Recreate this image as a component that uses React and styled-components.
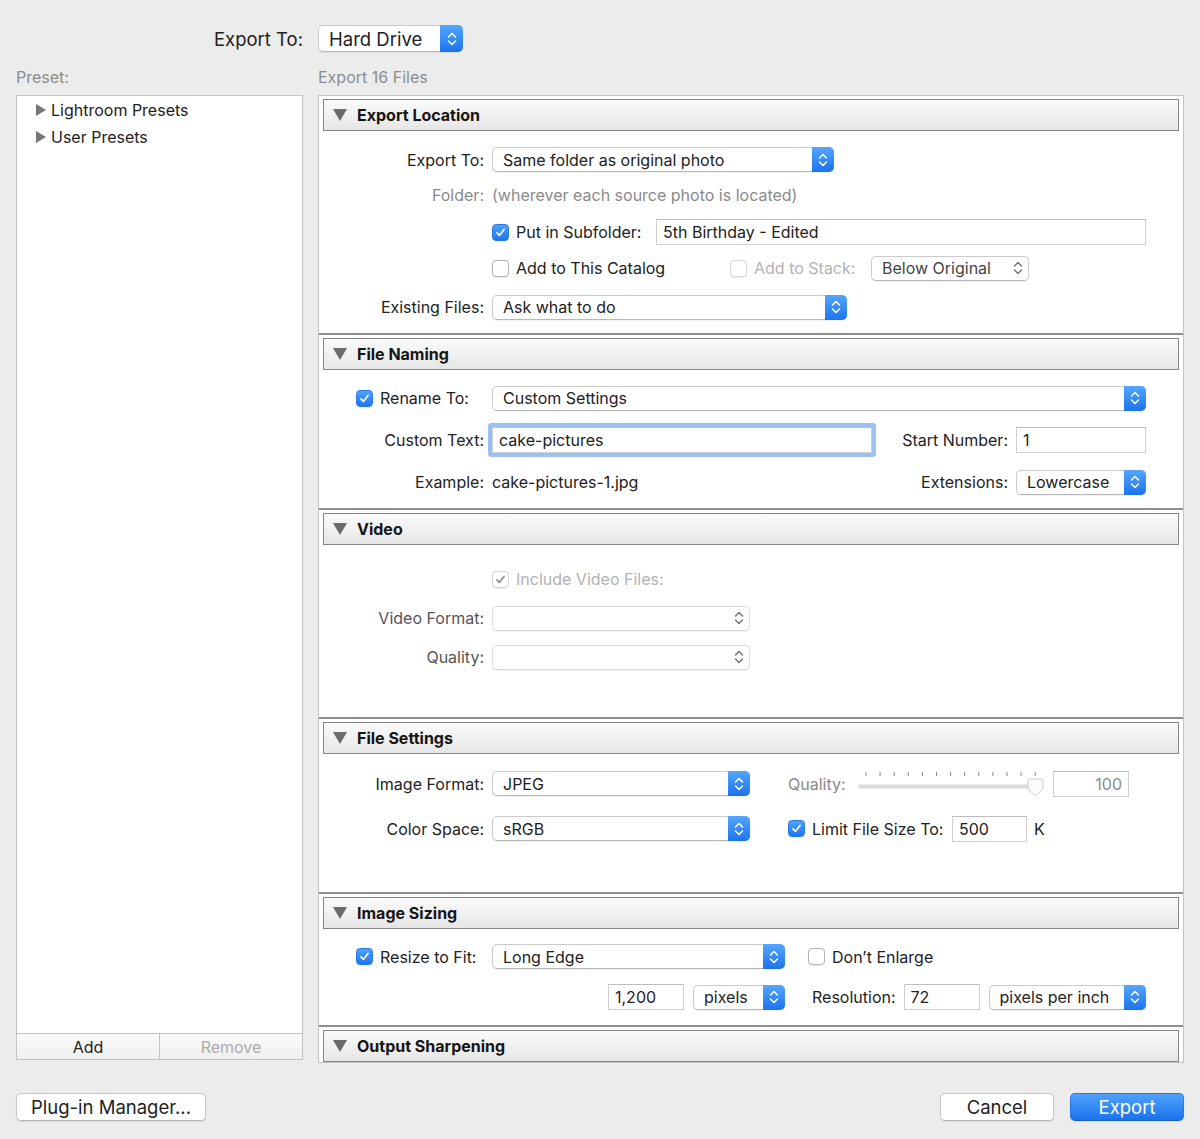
import styled, { createGlobalStyle } from 'styled-components'

const GlobalStyle = createGlobalStyle`
  html, body {
    margin: 0;
    padding: 0;
    background: #ececec;
  }
  body {
    font-family: Inter, "Helvetica Neue", "Liberation Sans", sans-serif;
    font-size: 16px;
    color: #222;
    -webkit-font-smoothing: antialiased;
  }
  * {
    box-sizing: border-box;
  }
`

const Page = styled.div`
  width: 1200px;
  height: 1139px;
  padding: 25px 16px 0;
  overflow: hidden;
`

const TopRow = styled.div`
  display: flex;
  align-items: center;
  gap: 15px;
  height: 27px;
`

const TopLabel = styled.div`
  width: 287px;
  text-align: right;
  font-size: 18.5px;
`

const SubRow = styled.div`
  display: flex;
  gap: 15px;
  height: 18px;
  margin-top: 16px;
  color: #8c8c8c;
  font-size: 16px;
  line-height: 18px;
  & > div:first-child {
    width: 287px;
  }
`

const Columns = styled.div`
  display: flex;
  gap: 15px;
  margin-top: 9px;
  height: 968px;
`

/* ---------- left preset list ---------- */

const PresetPanel = styled.div`
  width: 287px;
  height: 965px;
  background: #fff;
  border: 1px solid #c3c3c3;
  display: flex;
  flex-direction: column;
`

const TreeList = styled.div`
  flex: 1;
  padding: 0 0 0 19px;
`

const TreeItem = styled.div`
  display: flex;
  align-items: center;
  gap: 5px;
  height: 27px;
`

const TreeArrow = styled.span`
  width: 0;
  height: 0;
  border-top: 6px solid transparent;
  border-bottom: 6px solid transparent;
  border-left: 10px solid #777;
`

const PresetButtons = styled.div`
  display: flex;
  height: 26px;
  border-top: 1px solid #c3c3c3;
`

const PresetButton = styled.div`
  flex: 1;
  display: flex;
  align-items: center;
  justify-content: center;
  background: linear-gradient(#fbfbfb, #efefef);
  color: ${p => (p.$disabled ? '#ababab' : '#222')};
  & + & {
    border-left: 1px solid #c3c3c3;
  }
`

/* ---------- right settings panel ---------- */

const SettingsPanel = styled.div`
  width: 866px;
  height: 968px;
  background: #fff;
  border: 1px solid #c3c3c3;
  overflow: hidden;
`

const Section = styled.div`
  padding-top: 3px;
  & + & {
    border-top: 2px solid #8e8e8e;
  }
`

const Header = styled.div`
  height: 32px;
  margin: 0 4px;
  border: 1px solid #858585;
  background: linear-gradient(#fbfbfb, #e6e6e6);
  display: flex;
  align-items: center;
  gap: 10px;
  padding-left: 9px;
  font-weight: 700;
  color: #151515;
`

const HeaderArrow = styled.span`
  width: 0;
  height: 0;
  border-left: 7px solid transparent;
  border-right: 7px solid transparent;
  border-top: 12px solid #6b6b6b;
`

const Body = styled.div`
  height: ${p => p.$h}px;
  padding: ${p => p.$top}px 37px 0 0;
  display: flex;
  flex-direction: column;
  gap: ${p => p.$gap || 0}px;
`

const Row = styled.div`
  display: flex;
  align-items: center;
  height: ${p => p.$h || 26}px;
  flex: none;
`

const Label = styled.div`
  width: 165px;
  flex: none;
  margin-right: 8px;
  text-align: right;
  color: ${p => p.$tone || '#222'};
`

const InlineLabel = styled.div`
  flex: none;
  margin: 0 8px 0 ${p => p.$ml || 0}px;
  width: ${p => (p.$w ? `${p.$w}px` : 'auto')};
  color: ${p => p.$tone || '#222'};
`

const CheckCell = styled.div`
  width: 173px;
  flex: none;
  padding-left: 37px;
  display: flex;
  align-items: center;
  gap: 8px;
`

const CheckWrap = styled.div`
  display: flex;
  align-items: center;
  gap: 7px;
  flex: none;
  width: ${p => (p.$w ? `${p.$w}px` : 'auto')};
  margin-left: ${p => p.$ml || 0}px;
  color: ${p => (p.$disabled ? '#b3b3b3' : '#222')};
`

const Box = styled.span`
  width: 17px;
  height: 17px;
  border-radius: 4px;
  flex: none;
  display: flex;
  align-items: center;
  justify-content: center;
  background: ${p => (p.$on && !p.$disabled ? 'linear-gradient(#4ea2fd, #1f76ee)' : '#fff')};
  border: 1px solid ${p => (p.$on && !p.$disabled ? '#2a7ae6' : p.$disabled ? '#d8d8d8' : '#b3b3b3')};
  box-shadow: 0 0.5px 1px rgba(0, 0, 0, 0.08);
`

const Checkbox = ({ on, disabled }) => (
  <Box $on={on} $disabled={disabled}>
    {on && (
      <svg width="11" height="11" viewBox="0 0 11 11">
        <path
          d="M2 5.8 L4.4 8.4 L9 2.4"
          fill="none"
          stroke={disabled ? '#8a8a8a' : '#fff'}
          strokeWidth="1.7"
          strokeLinecap="round"
          strokeLinejoin="round"
        />
      </svg>
    )}
  </Box>
)

const Check = ({ on, disabled, children, w, ml }) => (
  <CheckWrap $disabled={disabled} $w={w} $ml={ml}>
    <Checkbox on={on} disabled={disabled} />
    {children}
  </CheckWrap>
)

const PopupBox = styled.div`
  flex: none;
  width: ${p => p.$w}px;
  height: ${p => p.$h || 25}px;
  margin-left: ${p => p.$ml || 0}px;
  display: flex;
  align-items: stretch;
  background: #fff;
  border: 1px solid ${p => (p.$disabled ? '#dedede' : '#cbcbcb')};
  border-bottom-color: ${p => (p.$disabled ? '#d6d6d6' : '#b8b8b8')};
  border-radius: 5px;
  box-shadow: 0 0.5px 1px rgba(0, 0, 0, 0.06);
  font-size: ${p => p.$fs || 16}px;
`

const PopupText = styled.div`
  flex: 1;
  display: flex;
  align-items: center;
  padding-left: ${p => p.$pl || 10}px;
  color: ${p => p.$tone || '#222'};
  white-space: nowrap;
  overflow: hidden;
`

const ArrowCap = styled.div`
  width: ${p => p.$w || 22}px;
  margin: -1px -1px -1px 0;
  display: flex;
  align-items: center;
  justify-content: center;
  border-radius: 0 5px 5px 0;
  background: ${p => (p.$plain ? 'transparent' : 'linear-gradient(#55a6fd, #1c73ec)')};
`

const Chevrons = ({ color }) => (
  <svg width="12" height="16" viewBox="0 0 12 16">
    <path
      d="M2.5 6 L6 2.5 L9.5 6 M2.5 10 L6 13.5 L9.5 10"
      fill="none"
      stroke={color}
      strokeWidth="1.5"
      strokeLinecap="round"
      strokeLinejoin="round"
    />
  </svg>
)

const Popup = ({ w, h, ml, fs, value, plain, disabled, tone, cap }) => (
  <PopupBox $w={w} $h={h} $ml={ml} $fs={fs} $disabled={disabled}>
    <PopupText $tone={tone}>{value}</PopupText>
    <ArrowCap $plain={plain} $w={cap}>
      <Chevrons color={plain ? '#777' : '#fff'} />
    </ArrowCap>
  </PopupBox>
)

const Field = styled.div`
  flex: none;
  width: ${p => p.$w}px;
  height: 26px;
  margin-left: ${p => p.$ml || 0}px;
  display: flex;
  align-items: center;
  justify-content: ${p => (p.$right ? 'flex-end' : 'flex-start')};
  padding: 0 6px;
  background: #fff;
  border: 1px solid #d0d0d0;
  border-top-color: #bdbdbd;
  color: ${p => p.$tone || '#222'};
  box-shadow: ${p => (p.$focus ? '0 0 0 4px #9cc0f2' : 'none')};
  border-radius: ${p => (p.$focus ? '1px' : '0')};
`

const Text = styled.div`
  color: ${p => p.$tone || '#222'};
  margin-left: ${p => p.$ml || 0}px;
  white-space: nowrap;
`

const RightGroup = styled.div`
  margin-left: auto;
  display: flex;
  align-items: center;
`

const SliderWrap = styled.div`
  width: 186px;
  height: 30px;
  flex: none;
  margin-right: 9px;
`

const QualitySlider = () => {
  const ticks = Array.from({ length: 13 }, (_, i) => 8 + i * 14.1)
  return (
    <SliderWrap>
      <svg width="186" height="30" viewBox="0 0 186 30">
        {ticks.map(x => (
          <line key={x} x1={x} y1="3" x2={x} y2="7" stroke="#8a8a8a" strokeWidth="1" />
        ))}
        <rect x="0" y="15.5" width="178" height="4" rx="2" fill="#dcdcdc" />
        <path
          d="M170 12 Q170 10 172 10 L183 10 Q185 10 185 12 L185 20 L177.5 27 L170 20 Z"
          fill="#fbfbfb"
          stroke="#cfcfcf"
          strokeWidth="1"
        />
      </svg>
    </SliderWrap>
  )
}

/* ---------- footer ---------- */

const Footer = styled.div`
  display: flex;
  align-items: center;
  margin-top: 30px;
  height: 28px;
`

const Button = styled.div`
  width: ${p => p.$w}px;
  height: 28px;
  margin-left: ${p => (p.$auto ? 'auto' : p.$ml ? `${p.$ml}px` : '0')};
  display: flex;
  align-items: center;
  justify-content: center;
  border-radius: 5px;
  font-size: 18.5px;
  background: ${p => (p.$primary ? 'linear-gradient(#4ea3fd, #1a72ea)' : '#fff')};
  color: ${p => (p.$primary ? '#fff' : '#222')};
  border: 1px solid ${p => (p.$primary ? '#2a77e0' : '#c8c8c8')};
  border-bottom-color: ${p => (p.$primary ? '#1a62c8' : '#b3b3b3')};
  box-shadow: 0 0.5px 1px rgba(0, 0, 0, 0.08);
`

const MUTED = '#8a8a8a'
const DIM = '#555'

export default function App() {
  return (
    <Page>
      <GlobalStyle />
      <TopRow>
        <TopLabel>Export To:</TopLabel>
        <Popup w={145} h={27} fs={18.5} value="Hard Drive" cap={23} />
      </TopRow>
      <SubRow>
        <div>Preset:</div>
        <div>Export 16 Files</div>
      </SubRow>

      <Columns>
        <PresetPanel>
          <TreeList>
            <TreeItem>
              <TreeArrow />
              Lightroom Presets
            </TreeItem>
            <TreeItem>
              <TreeArrow />
              User Presets
            </TreeItem>
          </TreeList>
          <PresetButtons>
            <PresetButton>Add</PresetButton>
            <PresetButton $disabled>Remove</PresetButton>
          </PresetButtons>
        </PresetPanel>

        <SettingsPanel>
          <Section>
            <Header>
              <HeaderArrow />
              Export Location
            </Header>
            <Body $h={202} $top={11}>
              <Row $h={35}>
                <Label>Export To:</Label>
                <Popup w={342} value="Same folder as original photo" />
              </Row>
              <Row $h={36}>
                <Label $tone={MUTED}>Folder:</Label>
                <Text $tone={MUTED}>(wherever each source photo is located)</Text>
              </Row>
              <Row $h={38}>
                <Label />
                <Check on w={164}>Put in Subfolder:</Check>
                <Field $w={490}>5th Birthday - Edited</Field>
              </Row>
              <Row $h={34}>
                <Label />
                <Check w={238}>Add to This Catalog</Check>
                <Check disabled w={141}>Add to Stack:</Check>
                <Popup w={158} value="Below Original" plain tone="#444" />
              </Row>
              <Row $h={44}>
                <Label>Existing Files:</Label>
                <Popup w={355} value="Ask what to do" />
              </Row>
            </Body>
          </Section>

          <Section>
            <Header>
              <HeaderArrow />
              File Naming
            </Header>
            <Body $h={138} $top={11} $gap={8}>
              <Row $h={34}>
                <CheckCell>
                  <Check on>Rename To:</Check>
                </CheckCell>
                <Popup w={654} value="Custom Settings" />
              </Row>
              <Row $h={34}>
                <Label>Custom Text:</Label>
                <Field $w={380} $focus>cake-pictures</Field>
                <RightGroup>
                  <InlineLabel>Start Number:</InlineLabel>
                  <Field $w={130}>1</Field>
                </RightGroup>
              </Row>
              <Row $h={34}>
                <Label>Example:</Label>
                <Text>cake-pictures-1.jpg</Text>
                <RightGroup>
                  <InlineLabel>Extensions:</InlineLabel>
                  <Popup w={130} value="Lowercase" />
                </RightGroup>
              </Row>
            </Body>
          </Section>

          <Section>
            <Header>
              <HeaderArrow />
              Video
            </Header>
            <Body $h={172} $top={21} $gap={13}>
              <Row>
                <Label />
                <Check on disabled>Include Video Files:</Check>
              </Row>
              <Row>
                <Label $tone={DIM}>Video Format:</Label>
                <Popup w={258} value="" plain disabled />
              </Row>
              <Row>
                <Label $tone={DIM}>Quality:</Label>
                <Popup w={258} value="" plain disabled />
              </Row>
            </Body>
          </Section>

          <Section>
            <Header>
              <HeaderArrow />
              File Settings
            </Header>
            <Body $h={138} $top={16.5} $gap={19}>
              <Row>
                <Label>Image Format:</Label>
                <Popup w={258} value="JPEG" />
                <InlineLabel $ml={38} $w={62} $tone={MUTED}>Quality:</InlineLabel>
                <QualitySlider />
                <Field $w={76} $right $tone={MUTED}>100</Field>
              </Row>
              <Row>
                <Label>Color Space:</Label>
                <Popup w={258} value="sRGB" />
                <Check on ml={38} w={164}>Limit File Size To:</Check>
                <Field $w={75}>500</Field>
                <Text $ml={7}>K</Text>
              </Row>
            </Body>
          </Section>

          <Section>
            <Header>
              <HeaderArrow />
              Image Sizing
            </Header>
            <Body $h={96} $top={14.5} $gap={14.5}>
              <Row>
                <CheckCell>
                  <Check on>Resize to Fit:</Check>
                </CheckCell>
                <Popup w={293} value="Long Edge" />
                <Check ml={23}>Don’t Enlarge</Check>
              </Row>
              <Row>
                <Label />
                <Field $w={76} $ml={116}>1,200</Field>
                <Popup w={92} ml={9} value="pixels" />
                <InlineLabel $ml={27}>Resolution:</InlineLabel>
                <Field $w={76}>72</Field>
                <Popup w={157} ml={9} value="pixels per inch" />
              </Row>
            </Body>
          </Section>

          <Section>
            <Header>
              <HeaderArrow />
              Output Sharpening
            </Header>
          </Section>
        </SettingsPanel>
      </Columns>

      <Footer>
        <Button $w={190}>Plug-in Manager...</Button>
        <Button $w={114} $auto>Cancel</Button>
        <Button $w={114} $ml={16} $primary>Export</Button>
      </Footer>
    </Page>
  )
}
